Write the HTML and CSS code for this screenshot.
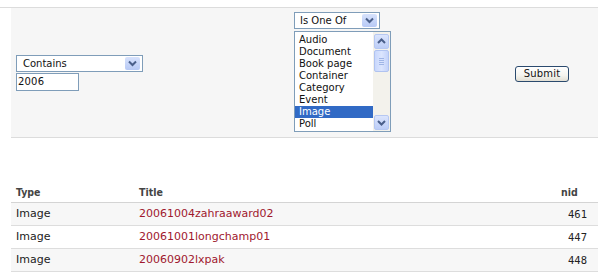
FILE: index.html
```html
<!DOCTYPE html>
<html lang="en">
<head>
  <meta charset="UTF-8" />
  <title>Content filter</title>
  <link rel="stylesheet" href="styles.css">
</head>
<body>

  <div class="filters">
    <form class="filter-box">
      <div class="cell">
        <div class="dropdown wide">
          <span>Contains</span>
          <span class="drop-btn">
            <svg width="15" height="13" viewBox="0 0 15 13"><path d="M4 4.5 L7.5 8 L11 4.5" fill="none" stroke="#4a5f8a" stroke-width="2"/></svg>
          </span>
        </div>
        <div class="textbox">2006</div>
      </div>

      <div class="cell">
        <div class="dropdown narrow">
          <span>Is One Of</span>
          <span class="drop-btn">
            <svg width="15" height="13" viewBox="0 0 15 13"><path d="M4 4.5 L7.5 8 L11 4.5" fill="none" stroke="#4a5f8a" stroke-width="2"/></svg>
          </span>
        </div>
        <div class="listbox">
          <ul class="options">
            <li>Audio</li>
            <li>Document</li>
            <li>Book page</li>
            <li>Container</li>
            <li>Category</li>
            <li>Event</li>
            <li class="selected">Image</li>
            <li>Poll</li>
          </ul>
          <div class="scrollbar">
            <span class="sb-btn">
              <svg width="15" height="15" viewBox="0 0 15 15"><path d="M4 9 L7.5 5.5 L11 9" fill="none" stroke="#4a5f8a" stroke-width="2"/></svg>
            </span>
            <span class="sb-thumb">
              <svg width="15" height="22" viewBox="0 0 15 22"><path d="M5 8.5 H10 M5 10.5 H10 M5 12.5 H10 M5 14.5 H10" stroke="#9fb5e6" stroke-width="1"/></svg>
            </span>
            <span class="sb-track"></span>
            <span class="sb-btn">
              <svg width="15" height="15" viewBox="0 0 15 15"><path d="M4 6 L7.5 9.5 L11 6" fill="none" stroke="#4a5f8a" stroke-width="2"/></svg>
            </span>
          </div>
        </div>
      </div>

      <div class="cell">
        <button type="button" class="submit">Submit</button>
      </div>
    </form>
  </div>

  <table class="results">
    <thead>
      <tr>
        <th class="col-type">Type</th>
        <th>Title</th>
        <th class="col-nid">nid</th>
      </tr>
    </thead>
    <tbody>
      <tr class="odd">
        <td>Image</td>
        <td><a href="#">20061004zahraaward02</a></td>
        <td class="num">461</td>
      </tr>
      <tr>
        <td>Image</td>
        <td><a href="#">20061001longchamp01</a></td>
        <td class="num">447</td>
      </tr>
      <tr class="odd">
        <td>Image</td>
        <td><a href="#">20060902lxpak</a></td>
        <td class="num">448</td>
      </tr>
    </tbody>
  </table>

</body>
</html>
```

FILE: styles.css
```css
body {
  margin: 0;
  font-family: 'DejaVu Sans', Verdana, sans-serif;
  color: #222;
  background-color: #ffffff;
}

.filters {
  margin-top: 7px;
  border-top: 1px solid #dcdcdc;
}

.filter-box {
  margin: 0 0 0 11px;
  height: 129px;
  padding: 0 5px;
  background-color: #f6f6f6;
  border-bottom: 1px solid #dcdcdc;
  display: grid;
  grid-template-columns: 278px 221px auto;
  align-items: center;
  font-size: 10px;
}

.cell {
  display: flex;
  flex-direction: column;
  align-items: flex-start;
}

.dropdown {
  display: flex;
  align-items: center;
  justify-content: space-between;
  box-sizing: border-box;
  height: 17px;
  border: 1px solid #7f9db9;
  background-color: #ffffff;
  color: #111;
}

.dropdown.wide {
  width: 127px;
  padding-left: 6px;
}

.dropdown.narrow {
  width: 86px;
  padding-left: 5px;
  margin-top: -1px;
}

.drop-btn {
  display: flex;
  width: 15px;
  height: 13px;
  margin-right: 2px;
  background: linear-gradient(#d7e2fc, #b7c9f5);
  border-radius: 2px;
}

.textbox {
  box-sizing: border-box;
  width: 63px;
  height: 18px;
  margin-top: 1px;
  padding: 2px 1px;
  border: 1px solid #7f9db9;
  background-color: #ffffff;
  color: #111;
  letter-spacing: 0.2px;
}

.listbox {
  display: flex;
  box-sizing: border-box;
  width: 97px;
  height: 101px;
  margin-top: 2px;
  border: 1px solid #7f9db9;
  background-color: #ffffff;
}

.options {
  list-style: none;
  margin: 0;
  padding: 2px 0 0 0;
  width: 78px;
}

.options li {
  height: 12px;
  line-height: 12px;
  padding-left: 4px;
  color: #111;
}

.options li.selected {
  background-color: #316ac5;
  color: #ffffff;
}

.scrollbar {
  display: flex;
  flex-direction: column;
  width: 17px;
  padding: 2px 1px 1px 1px;
  box-sizing: border-box;
  background-color: #f3f2ec;
}

.sb-btn {
  display: flex;
  width: 15px;
  height: 15px;
  background: linear-gradient(#dbe5fd, #bccdf7);
  border: 1px solid #b6c8f2;
  box-sizing: border-box;
  border-radius: 2px;
}

.sb-btn svg {
  margin: -1px;
}

.sb-thumb {
  display: flex;
  margin-top: 1px;
  width: 15px;
  height: 22px;
  background: linear-gradient(90deg, #c8d7fc, #dbe5fe 50%, #c4d3fa);
  border: 1px solid #b0c3f0;
  box-sizing: border-box;
  border-radius: 2px;
}

.sb-thumb svg {
  margin: -1px;
}

.sb-track {
  flex: 1;
}

.submit {
  width: 54px;
  height: 16px;
  padding: 0;
  font-family: inherit;
  font-size: 10px;
  letter-spacing: 0.2px;
  color: #111;
  border: 1px solid #2b4a6e;
  border-radius: 3px;
  background: linear-gradient(#ffffff, #f4f3ee 60%, #e2dfd4);
  margin-top: 2px;
}

.results {
  margin: 43px 0 0 11px;
  width: 587px;
  border-collapse: collapse;
  font-size: 11px;
}

.results th {
  text-align: left;
  font-weight: bold;
  font-stretch: condensed;
  font-size: 10.5px;
  color: #444;
  padding: 4px 5px 3px 5px;
  line-height: 14px;
  border-bottom: 1px solid #d4d4d4;
}

.results .col-type {
  width: 113px;
}

.results .col-nid {
  width: 26px;
  padding-right: 11px;
}

.results td {
  padding: 4px 5px;
  line-height: 14px;
  border-bottom: 1px solid #dddddd;
}

.results tr.odd td {
  background-color: #f7f7f7;
}

.results a {
  color: #a0182e;
  text-decoration: none;
}

.results .num {
  text-align: right;
  padding-right: 11px;
  font-family: 'DejaVu Sans Mono', monospace;
  font-size: 10.5px;
}
```
